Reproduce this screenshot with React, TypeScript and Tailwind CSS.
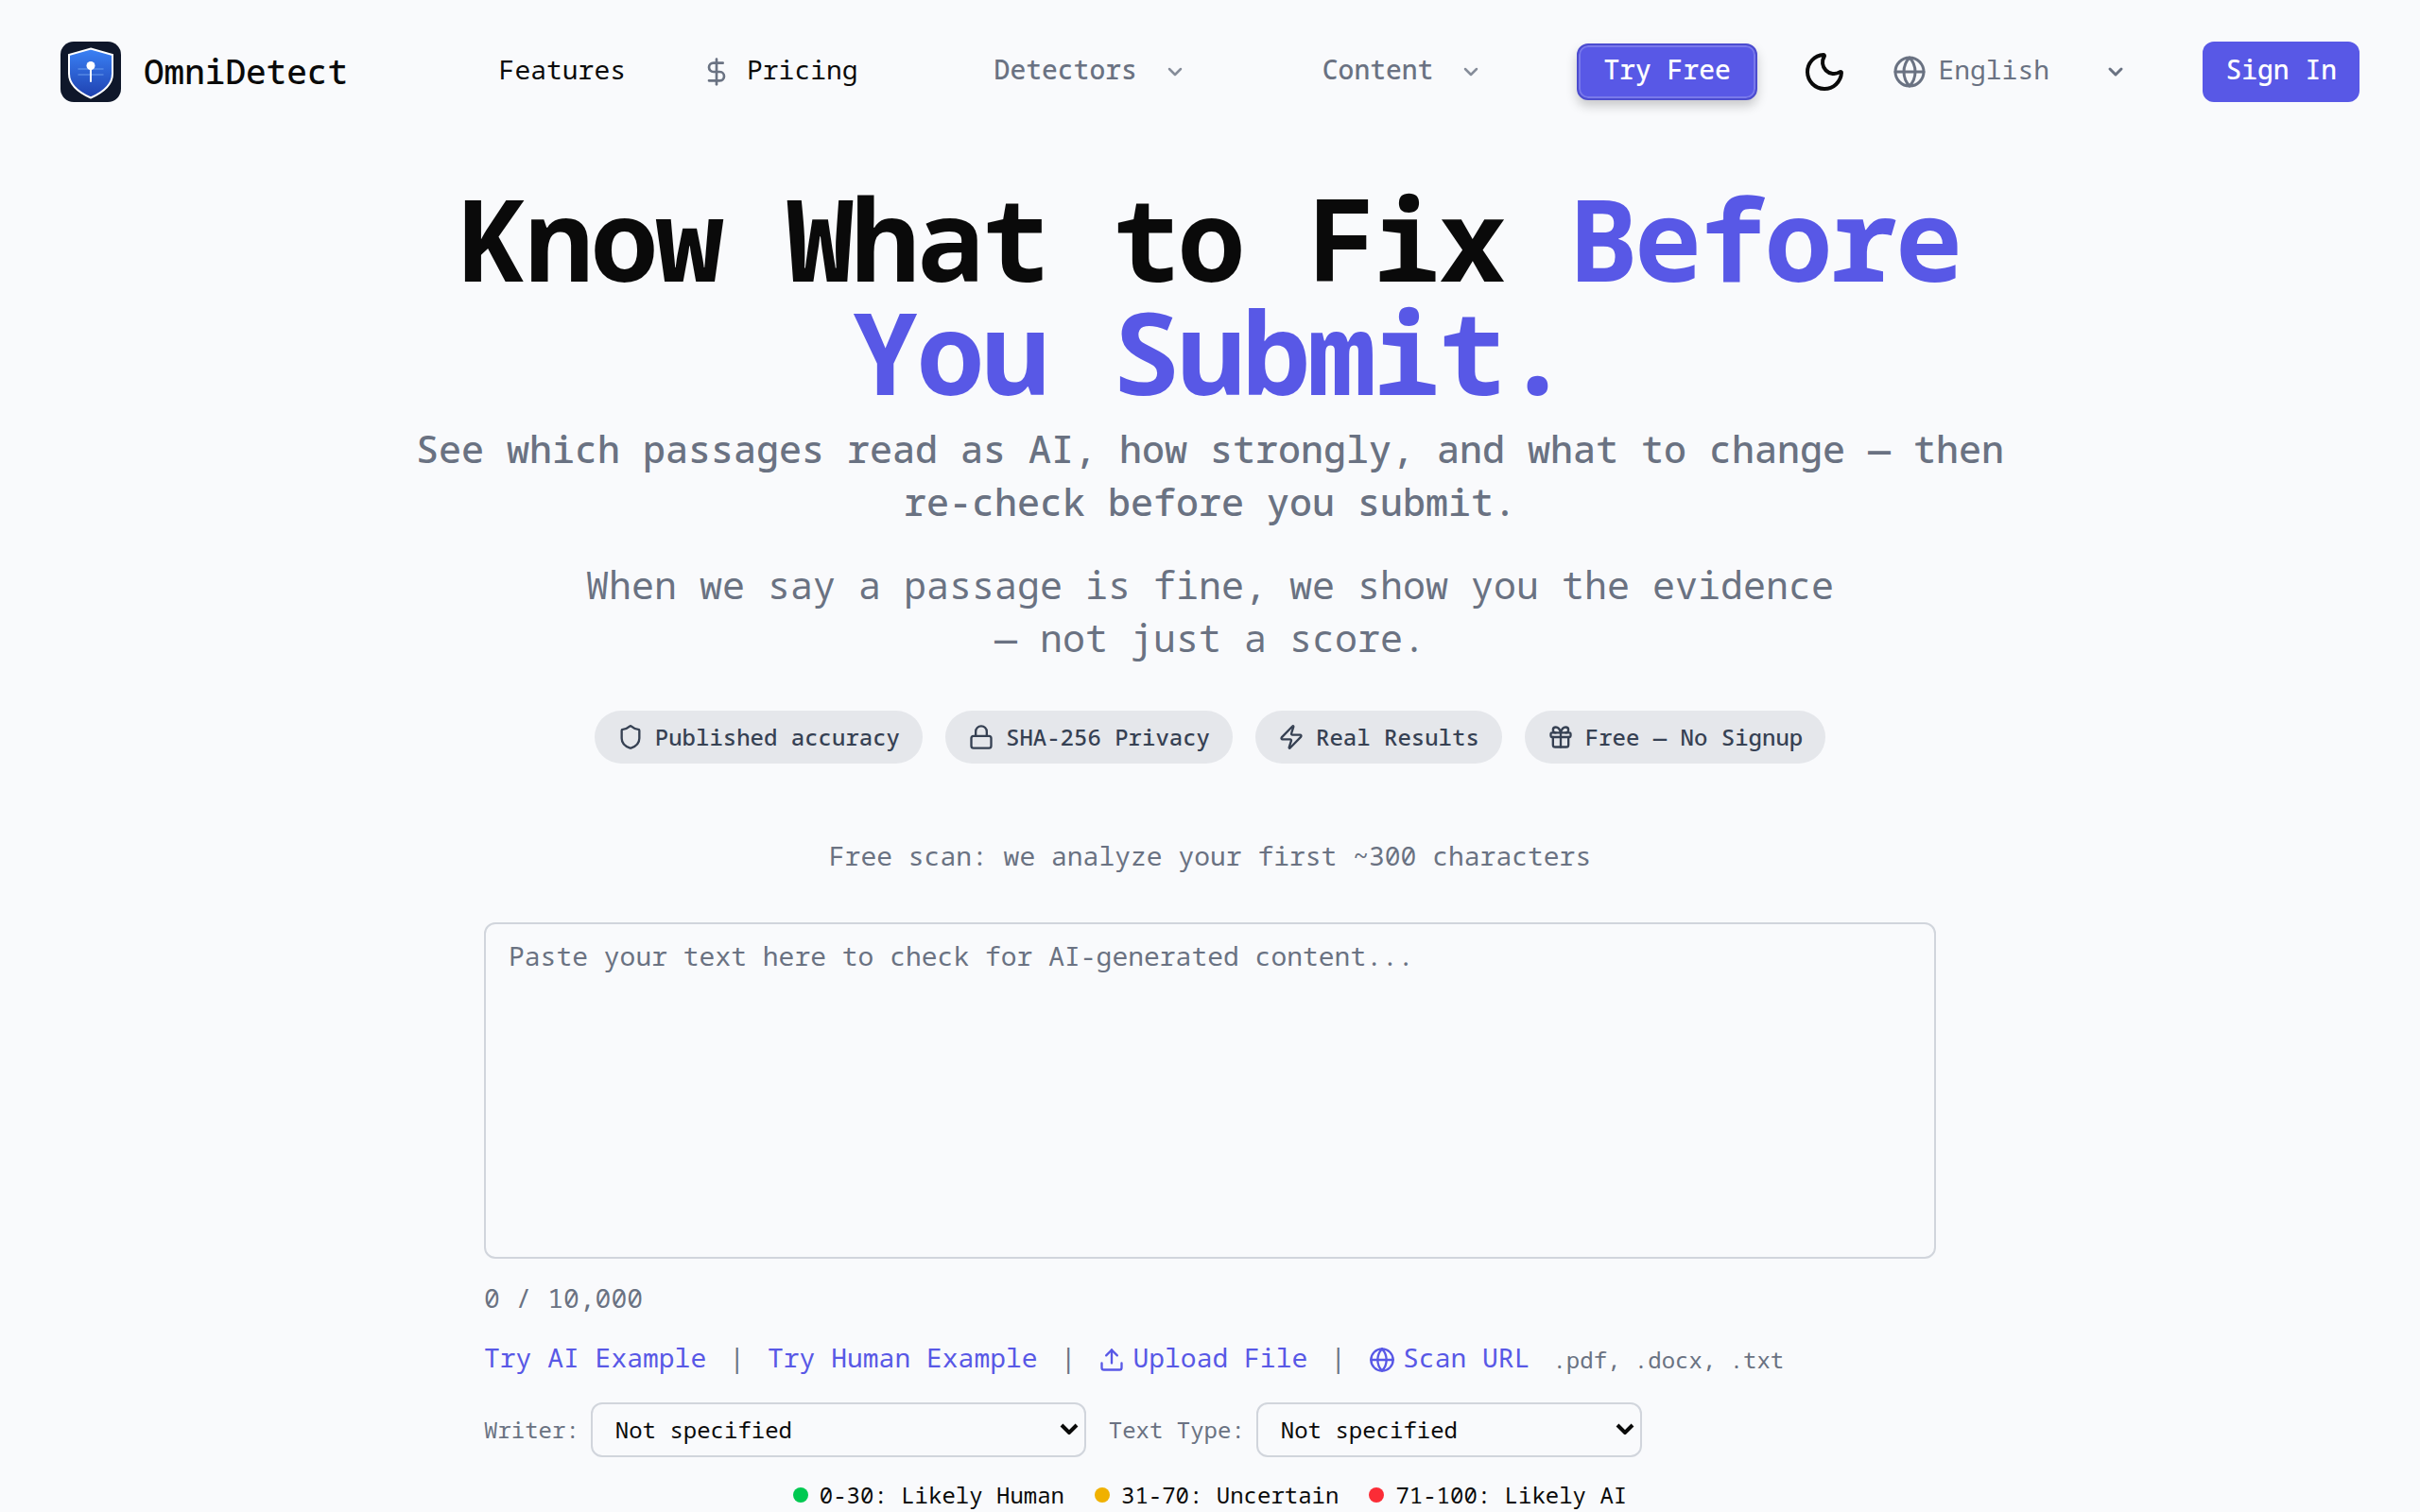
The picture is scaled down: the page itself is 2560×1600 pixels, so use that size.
import { useState } from "react";
import type { ReactNode, SVGProps } from "react";
import { ChevronDown, DollarSign, Gift, Globe, Lock, Moon, Shield, Upload, Zap } from "lucide-react";

function Logo() {
  return (
    <svg viewBox="0 0 64 64" className="size-16" aria-hidden="true">
      <defs>
        <linearGradient id="shield-fill" x1="0" y1="0" x2="0" y2="1">
          <stop offset="0" stopColor="#3b82f6" />
          <stop offset="1" stopColor="#1e40af" />
        </linearGradient>
      </defs>
      <rect width="64" height="64" rx="14" fill="#0f172a" />
      <path
        d="M32 7.5 55 14v20c0 11-9.500 19.500-23 25.500C18.500 53.500 9 45 9 34V14Z"
        fill="url(#shield-fill)"
        stroke="#fff"
        strokeWidth="2"
      />
      <path d="M19 29h26M19 35h26" stroke="#93c5fd" strokeOpacity="0.4" strokeWidth="1.500" strokeLinecap="round" />
      <circle cx="32" cy="25.500" r="4.500" fill="#fff" />
      <path d="M32 28v14" stroke="#fff" strokeWidth="2" strokeLinecap="round" />
    </svg>
  );
}

function SelectArrow(props: SVGProps<SVGSVGElement>) {
  return (
    <svg viewBox="0 0 20 12" fill="none" stroke="currentColor" strokeWidth="4" aria-hidden="true" {...props}>
      <path d="m2 2 8 8 8-8" />
    </svg>
  );
}

/* Text of a nav item or action, lifted a little against its icon. */
function Label({ children }: { children: ReactNode }) {
  return <span className="block pb-1.5 leading-9">{children}</span>;
}

function Badge({ icon, children }: { icon: ReactNode; children: ReactNode }) {
  return (
    <li className="flex h-14 items-center gap-3 rounded-full bg-gray-200 px-6 text-2xl font-medium text-gray-700">
      {icon}
      {children}
    </li>
  );
}

function Field({ id, label, width, options }: { id: string; label: string; width: string; options: string[] }) {
  return (
    <div className="flex items-center gap-3">
      <label htmlFor={id} className="text-gray-500">
        {label}
      </label>
      <div className="relative">
        <select
          id={id}
          className={`h-[58px] appearance-none rounded-xl border-2 border-gray-300 bg-transparent px-6 text-2xl text-neutral-950 ${width}`}
        >
          {options.map((o) => (
            <option key={o}>{o}</option>
          ))}
        </select>
        <SelectArrow className="pointer-events-none absolute top-[22px] right-2 h-3 w-5" />
      </div>
    </div>
  );
}

function Legend({ color, children }: { color: string; children: ReactNode }) {
  return (
    <li className="flex items-center gap-3">
      <span className={`size-4 rounded-full ${color}`} />
      {children}
    </li>
  );
}

export default function App() {
  const [text, setText] = useState("");
  return (
    <div className="min-h-screen bg-[#f9fafc] font-['Noto_Sans_Mono','DejaVu_Sans_Mono',monospace] text-neutral-950">
      <header className="flex h-[152px] items-center justify-between px-16">
        <a href="#" className="flex items-center gap-6 text-4xl font-medium">
          <Logo />
          OmniDetect
        </a>
        <nav className="ml-28 flex items-center text-[28px] font-medium">
          <a href="#features" className="mr-20 font-normal">
            <Label>Features</Label>
          </a>
          <a href="#pricing" className="mr-36 flex items-center gap-4 font-normal">
            <DollarSign className="size-8 text-gray-500" />
            <Label>Pricing</Label>
          </a>
          <button type="button" className="mr-36 flex items-center gap-7 text-gray-500">
            <Label>Detectors</Label>
            <ChevronDown className="size-6 opacity-80" strokeWidth={2.5} />
          </button>
          <button type="button" className="mr-25 flex items-center gap-7 text-gray-500">
            <Label>Content</Label>
            <ChevronDown className="size-6 opacity-80" strokeWidth={2.5} />
          </button>
          <a
            href="#try"
            className="flex h-15 items-center rounded-xl border-2 border-[#4c4ccf] bg-[#5858e6] px-[26px] text-white inset-ring-2 inset-ring-white/20 shadow-[0_6px_12px_rgba(0,0,0,0.2)]"
          >
            <Label>Try Free</Label>
          </a>
        </nav>
        <div className="flex items-center text-[28px]">
          <button type="button" aria-label="Toggle dark mode" className="mr-12">
            <Moon className="size-12" />
          </button>
          <div className="relative mr-20 flex items-center text-gray-500">
            <Globe className="mr-3 size-9" />
            <select aria-label="Language" className="w-[200px] appearance-none bg-transparent pb-1.5 leading-9">
              <option>English</option>
              <option>Español</option>
            </select>
            <ChevronDown className="pointer-events-none absolute right-0 size-6" strokeWidth={3} />
          </div>
          <button type="button" className="h-16 rounded-xl bg-[#5858e6] px-6 font-medium text-white">
            <Label>Sign In</Label>
          </button>
        </div>
      </header>

      <main className="flex flex-col items-center pt-10 text-center">
        <h1 className="max-w-[1728px] text-[120px] leading-none font-bold tracking-tight">
          Know What to Fix <span className="text-[#5858e6]">Before You Submit.</span>
        </h1>
        <p className="mt-[15px] max-w-[1728px] text-[40px] leading-14 font-medium text-gray-500">
          See which passages read as AI, how strongly, and what to change — then re-check before you submit.
        </p>
        <p className="mt-8 max-w-[1344px] text-[40px] leading-14 text-gray-500">
          When we say a passage is fine, we show you the evidence — not just a score.
        </p>
        <ul className="mt-[49px] flex flex-wrap justify-center gap-6">
          <Badge icon={<Shield className="size-7" />}>Published accuracy</Badge>
          <Badge icon={<Lock className="size-7" />}>SHA-256 Privacy</Badge>
          <Badge icon={<Zap className="size-7" />}>Real Results</Badge>
          <Badge icon={<Gift className="size-7" />}>Free — No Signup</Badge>
        </ul>
        <p className="mt-[77px] text-[28px] leading-10 text-gray-500">Free scan: we analyze your first ~300 characters</p>

        <form className="mt-[51px] w-full max-w-[1536px] text-left text-2xl">
          <textarea
            aria-label="Text to check"
            value={text}
            onChange={(e) => setText(e.target.value)}
            placeholder="Paste your text here to check for AI-generated content..."
            className="block h-[356px] w-full resize-none rounded-xl border-2 border-gray-300 bg-transparent px-6 py-[13px] text-[28px] leading-10 placeholder:text-gray-500"
          />
          <p className="mt-[21px] text-[28px] leading-10 text-gray-500">{text.length} / 10,000</p>
          <div className="mt-[25px] flex items-center gap-6 text-[28px] text-gray-500">
            <button type="button" className="text-[#5858e6]">
              <Label>Try AI Example</Label>
            </button>
            <Label>|</Label>
            <button type="button" className="text-[#5858e6]">
              <Label>Try Human Example</Label>
            </button>
            <Label>|</Label>
            <button type="button" className="flex items-center gap-2 text-[#5858e6]">
              <Upload className="size-7" />
              <Label>Upload File</Label>
            </button>
            <Label>|</Label>
            <button type="button" className="flex items-center gap-2 text-[#5858e6]">
              <Globe className="size-7" />
              <Label>Scan URL</Label>
            </button>
            <span className="text-2xl">.pdf, .docx, .txt</span>
          </div>
          <div className="mt-6 flex items-center gap-6">
            <Field
              id="writer"
              label="Writer:"
              width="w-[524px]"
              options={["Not specified", "Native English writer", "Non-native English writer"]}
            />
            <Field id="text-type" label="Text Type:" width="w-[408px]" options={["Not specified", "Academic essay", "Blog post"]} />
          </div>
          <ul className="mt-6 flex items-center justify-center gap-8 leading-8">
            <Legend color="bg-green-500">0-30: Likely Human</Legend>
            <Legend color="bg-yellow-500">31-70: Uncertain</Legend>
            <Legend color="bg-red-500">71-100: Likely AI</Legend>
          </ul>
        </form>
      </main>
    </div>
  );
}
